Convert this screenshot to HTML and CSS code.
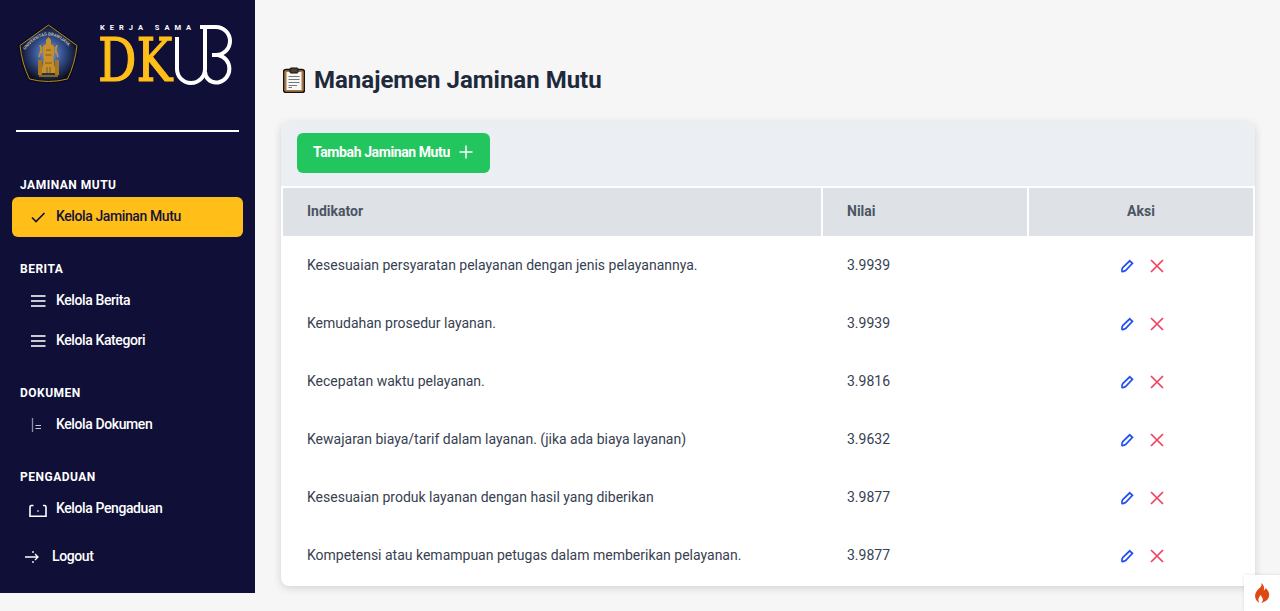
FILE: index.html
```html
<!DOCTYPE html>
<html lang="id">
<head>
    <meta charset="UTF-8">
    <title>Manajemen Jaminan Mutu</title>
    <link rel="stylesheet" href="styles.css">
</head>
<body>
    <div class="layout">
        <aside class="sidebar">
            <div class="brand">
                <svg class="crest" viewBox="0 0 62 62" width="62" height="62">
                    <defs>
                        <radialGradient id="crestFill" cx="50%" cy="50%" r="52%">
                            <stop offset="0" stop-color="#7d9fd6"/>
                            <stop offset="0.5" stop-color="#34508f"/>
                            <stop offset="1" stop-color="#0b0c1e"/>
                        </radialGradient>
                        <path id="crestArc" d="M7 27 Q30 -2 54 27"/>
                    </defs>
                    <path d="M30.500 0.500 L61 22 Q59 42 50.500 57.500 Q30.500 63 10.500 57.500 Q2 42 0 22 Z" fill="#0a0a18"/>
                    <path d="M30.500 2 L59 22.500 Q57 41 49.500 56 Q30.500 61 11.500 56 Q4 41 2 22.500 Z" fill="url(#crestFill)" stroke="#c59a22" stroke-width="0.900"/>
                    <text class="crest-text"><textPath href="#crestArc">UNIVERSITAS BRAWIJAYA</textPath></text>
                    <path d="M30.500 14 L33 17 V21 L36 23 L35.500 38 L38 50 H23 L25.500 38 L25 23 L28 21 V17 Z" fill="#c8902a"/>
                    <path d="M24 24 L21 34 M37 24 L40 34 M22 22 L24 30 M39 22 L37 30" stroke="#c8902a" stroke-width="1.500" fill="none"/>
                    <rect x="20" y="37" width="4" height="15" fill="#a87720"/>
                    <rect x="37" y="37" width="4" height="15" fill="#a87720"/>
                    <path d="M21 52 H40 V54 H21 Z" fill="#8c6519"/>
                    <path d="M28 27 H33 M27.500 32 H33.500 M27 40 H34 M29 44 V50 M32 44 V50" stroke="#6d4c10" stroke-width="0.800" fill="none"/>
                </svg>
                <div class="wordmark">
                    <div class="wordmark-top">KERJA SAMA</div>
                    <div class="wordmark-main">DK</div>
                    <svg class="wordmark-ub" viewBox="0 0 64 64" width="64" height="64">
                        <path d="M5 15 V47 a14 14 0 0 0 28 0 V5" fill="none" stroke="#fff" stroke-width="4"/>
                        <path d="M28 5 H44 a14 14 0 0 1 0 28 H40 M44 33 H46 a14 14 0 0 1 0 27.500 H44 a11 11 0 0 1 -11 -11" fill="none" stroke="#fff" stroke-width="4"/>
                    </svg>
                </div>
            </div>
            <hr class="divider">

            <div class="menu-label first">Jaminan Mutu</div>
            <a class="menu-item active">
                <svg class="menu-icon" viewBox="0 0 18 18"><path d="M3 10.500 L7 14.500 L15.500 6" fill="none" stroke="currentColor" stroke-width="1.700"/></svg>
                <span>Kelola Jaminan Mutu</span>
            </a>

            <div class="menu-label">Berita</div>
            <a class="menu-item">
                <svg class="menu-icon dim" viewBox="0 0 18 18"><path d="M2 5 H16.500 M2 10 H16.500 M2 15 H16.500" fill="none" stroke="currentColor" stroke-width="1.800"/></svg>
                <span>Kelola Berita</span>
            </a>
            <a class="menu-item">
                <svg class="menu-icon dim" viewBox="0 0 18 18"><path d="M2 5 H16.500 M2 10 H16.500 M2 15 H16.500" fill="none" stroke="currentColor" stroke-width="1.800"/></svg>
                <span>Kelola Kategori</span>
            </a>

            <div class="menu-label">Dokumen</div>
            <a class="menu-item">
                <svg class="menu-icon dim" viewBox="0 0 18 18"><path d="M3.500 3 V17" fill="none" stroke="#8d8da3" stroke-width="1.300"/><path d="M6.500 10.500 H12 M6.500 13.500 H12" fill="none" stroke="currentColor" stroke-width="1"/></svg>
                <span>Kelola Dokumen</span>
            </a>

            <div class="menu-label">Pengaduan</div>
            <a class="menu-item">
                <svg class="menu-icon" viewBox="0 0 18 18"><path d="M4.500 6.500 H2.500 Q1 6.500 1 8 V17.200 H17 V8 Q17 6.500 15.500 6.500 H14" fill="none" stroke="currentColor" stroke-width="1.600"/><path d="M8 12 H10" stroke="currentColor" stroke-width="1"/></svg>
                <span>Kelola Pengaduan</span>
            </a>

            <a class="menu-item logout">
                <svg class="menu-icon" viewBox="0 0 18 18"><path d="M3 10 H16 M13 7 L16 10 L13 13 M11 4 V6 M11 14 V16" fill="none" stroke="currentColor" stroke-width="1.300"/></svg>
                <span>Logout</span>
            </a>
        </aside>

        <main class="content">
            <h1 class="page-title">
                <svg viewBox="0 0 22 26" width="22" height="26">
                    <rect x="0.500" y="2.500" width="21" height="23" rx="2.500" fill="#a5784c" stroke="#15110d" stroke-width="1.500"/>
                    <rect x="3.500" y="5" width="15" height="18" fill="#f7f7f5"/>
                    <rect x="7" y="1" width="8" height="5" rx="1" fill="#4a4038" stroke="#15110d"/>
                    <path d="M5.500 9.500 H16.500 M5.500 12.500 H16.500 M5.500 15.500 H16.500 M5.500 18.500 H14 M5.500 20.500 H9" stroke="#77777a" stroke-width="1" fill="none"/>
                </svg>
                <span>Manajemen Jaminan Mutu</span>
            </h1>
            <section class="card">
                <div class="card-header">
                    <button class="btn-add">
                        <span>Tambah Jaminan Mutu</span>
                        <svg viewBox="0 0 16 16" width="16" height="16"><path d="M8 1.500 V14.500 M1.500 8 H14.500" fill="none" stroke="currentColor" stroke-width="1.500"/></svg>
                    </button>
                </div>
                <table class="data-table">
                    <thead>
                        <tr>
                            <th class="col-name">Indikator</th>
                            <th class="col-value">Nilai</th>
                            <th class="col-action">Aksi</th>
                        </tr>
                    </thead>
                    <tbody id="rows"></tbody>
                </table>
            </section>
        </main>
    </div>

    <div class="ci-badge">
        <svg viewBox="0 0 20 24" width="18" height="22"><path d="M9 1 C11 5 6 7 4 10 C1 14 2 20 7 23 C5 20 6 17 9 14 C9 17 11 17 11 19 C11 21 10 22 9 23 C14 22 18 19 18 14 C18 10 15 8 14 6 C14 8 13 9 12 9 C13 6 12 3 9 1 Z" fill="#dd4814"/></svg>
    </div>

    <script>
        const items = [
            ['Kesesuaian persyaratan pelayanan dengan jenis pelayanannya.', '3.9939'],
            ['Kemudahan prosedur layanan.', '3.9939'],
            ['Kecepatan waktu pelayanan.', '3.9816'],
            ['Kewajaran biaya/tarif dalam layanan. (jika ada biaya layanan)', '3.9632'],
            ['Kesesuaian produk layanan dengan hasil yang diberikan', '3.9877'],
            ['Kompetensi atau kemampuan petugas dalam memberikan pelayanan.', '3.9877']
        ];

        document.getElementById('rows').innerHTML = items.map(([name, value]) => `
            <tr>
                <td>${name}</td>
                <td>${value}</td>
                <td class="actions">
                    <svg class="edit" viewBox="0 0 14 14" width="14" height="14"><path d="M9.800 1.800 L12.400 4.300 L5.600 11.500 Q3.500 12.900 2 12.300 Q1.300 10.500 2.700 8.700 Z" fill="none" stroke="currentColor" stroke-width="1.800"/></svg>
                    <svg class="remove" viewBox="0 0 14 14" width="14" height="14"><path d="M1 1 L13 13 M13 1 L1 13" fill="none" stroke="currentColor" stroke-width="1.700"/></svg>
                </td>
            </tr>`).join('');
    </script>
</body>
</html>
```

FILE: styles.css
```css
:root {
    --navy: #100f37;
    --yellow: #ffbe18;
    --green: #22c55e;
}

* {
    box-sizing: border-box;
}

body {
    font-family: 'Roboto', sans-serif;
    background: #f6f6f6;
    margin: 0;
    height: 611px;
    overflow: hidden;
}

.layout {
    display: flex;
    align-items: flex-start;
}

.sidebar {
    background: var(--navy);
    width: 255px;
    height: 593px;
    flex-shrink: 0;
    padding: 22px 12px 0;
    color: white;
}

.brand {
    display: flex;
    align-items: flex-start;
    gap: 20px;
    padding-left: 6px;
    height: 62px;
}

.crest {
    margin-top: 1px;
}

.crest-text {
    font-family: 'Roboto', sans-serif;
    font-size: 4.300px;
    font-weight: 700;
    fill: #b9b6a8;
}

.wordmark {
    width: 135px;
    position: relative;
}

.wordmark-top {
    font-size: 7.500px;
    font-weight: 700;
    letter-spacing: 5px;
    height: 12px;
    line-height: 12px;
    white-space: nowrap;
}

.wordmark-main {
    font-family: 'DejaVu Serif Condensed', 'DejaVu Serif', serif;
    font-size: 60px;
    line-height: 46px;
    height: 46px;
    width: 73px;
    margin: 3px 0 0 -2px;
    color: var(--yellow);
    -webkit-text-stroke: 1.2px var(--yellow);
    transform: scaleX(0.89);
    transform-origin: left;
}

.wordmark-ub {
    position: absolute;
    left: 72px;
    top: 0;
}

.divider {
    border: none;
    background: white;
    height: 2px;
    margin: 46px 4px 0;
}

.menu-label {
    font-size: 12px;
    font-weight: 700;
    line-height: 16px;
    text-transform: uppercase;
    letter-spacing: 0.5px;
    padding-left: 8px;
    margin: 24px 0 4px;
}

.menu-label.first {
    margin-top: 45px;
}

.menu-item {
    display: flex;
    align-items: center;
    gap: 9px;
    height: 40px;
    padding: 0 16px 2px 17px;
    border-radius: 6px;
    font-size: 14px;
    font-weight: 500;
    letter-spacing: -0.4px;
    color: white;
}

.menu-item.active {
    background: var(--yellow);
    color: #14133a;
}

.menu-icon {
    width: 18px;
    height: 18px;
    flex-shrink: 0;
}

.menu-icon.dim {
    color: #c9c9d4;
}

.logout {
    margin-top: 8px;
    padding-left: 10px;
    gap: 12px;
}

.content {
    flex: 1;
    padding: 63px 25px 0 26px;
}

.page-title {
    display: flex;
    align-items: center;
    gap: 9px;
    font-size: 24px;
    font-weight: 700;
    line-height: 34px;
    color: #1e293b;
    margin: 0 0 25px;
    padding-left: 2px;
}

.card {
    background: white;
    border-radius: 8px;
    box-shadow: 0 2px 8px rgba(0,0,0,0.15);
    overflow: hidden;
}

.card-header {
    background: #ebeef2;
    height: 64px;
    padding: 11px 16px;
}

.btn-add {
    display: flex;
    align-items: center;
    gap: 8px;
    height: 40px;
    padding: 0 16px 2px;
    background: var(--green);
    color: white;
    border: none;
    border-radius: 6px;
    font-family: inherit;
    font-size: 14px;
    font-weight: 700;
    letter-spacing: -0.4px;
}

.data-table {
    width: 100%;
    border-spacing: 2px;
    border-collapse: separate;
    table-layout: fixed;
    font-size: 14px;
    color: #374151;
}

.data-table th {
    background: #dee1e6;
    height: 48px;
    text-align: left;
    padding: 0 24px 2px;
    font-weight: 700;
    color: #4b5563;
}

.col-name { width: 538px; }
.col-value { width: 204px; }

.data-table th.col-action {
    text-align: center;
}

.data-table td {
    height: 56px;
    padding: 0 24px 2px;
}

.data-table td.actions {
    text-align: center;
    padding-left: 26px;
}

.actions svg {
    margin: 0 6px;
    vertical-align: middle;
}

.edit { color: #2450f0; }
.remove { color: #f43f5e; }

.ci-badge {
    position: fixed;
    right: 0;
    bottom: 0;
    width: 36px;
    height: 36px;
    background: white;
    box-shadow: 0 0 3px rgba(0,0,0,0.12);
    display: flex;
    align-items: center;
    justify-content: center;
}
```
